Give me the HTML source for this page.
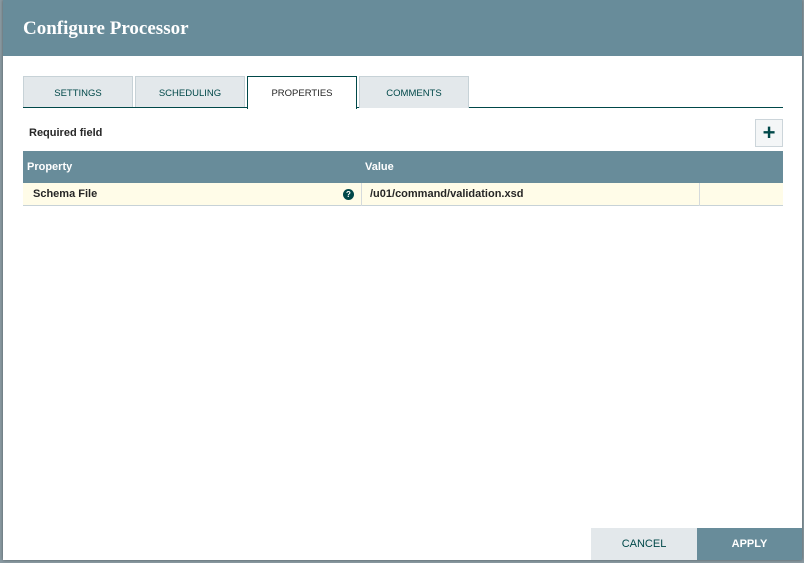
<!DOCTYPE html>
<html><head><style>
*{box-sizing:border-box;margin:0;padding:0}
body{width:804px;height:563px;background:#8a9aa2;font-family:"Liberation Sans",sans-serif;position:relative;overflow:hidden}
#dlg{position:absolute;left:3px;top:0;width:799px;height:560px;background:#fff;box-shadow:0 0 3px rgba(0,0,0,.4)}
#hdr{height:56px;background:#688c9a;color:#fff;font-family:"Liberation Serif",serif;font-weight:bold;font-size:19px;padding:18px 0 0 20px}
.tab{position:absolute;top:76px;height:32px;width:110px;background:#e3e8eb;border:1px solid #c7d2d7;border-bottom:none;font-size:9.5px;color:#004849;text-align:center;line-height:33px}
.tab.act{background:#fff;border:1px solid #004849;border-bottom:none;height:33px;color:#262626}
#line{position:absolute;left:20px;top:107px;width:760px;height:1px;background:#004849}
.abs{position:absolute}
</style></head><body>
<div id="dlg">
<div id="hdr">Configure Processor</div>
<div class="tab" style="left:20px">SETTINGS</div>
<div class="tab" style="left:132px">SCHEDULING</div>
<div id="line"></div>
<div class="tab act" style="left:244px">PROPERTIES</div>
<div class="tab" style="left:356px">COMMENTS</div>
<div class="abs" style="left:26px;top:127px;font-size:11px;color:#262626;font-weight:bold">Required field</div>
<div class="abs" style="left:752px;top:119px;width:28px;height:28px;border:1px solid #ccd5da;background:#f4f6f7;color:#004849;font-size:22px;font-weight:bold;text-align:center;line-height:26px">+</div>
<div class="abs" style="left:20px;top:151px;width:760px;height:32px;background:#688c9a;color:#fff;font-weight:bold;font-size:11px">
<span class="abs" style="left:4px;top:10px">Property</span><span class="abs" style="left:342px;top:10px">Value</span></div>
<div class="abs" style="left:20px;top:183px;width:760px;height:23px;background:#fffce8;border-bottom:1px solid #c7d2d7;font-size:11px;color:#262626;font-weight:bold">
<span class="abs" style="left:10px;top:5px">Schema File</span>
<span class="abs" style="left:320px;top:6px;width:11px;height:11px;border-radius:50%;background:#004849;color:#fff;font-size:8px;font-weight:bold;text-align:center;line-height:11px">?</span>
<span class="abs" style="left:338px;top:0;width:1px;height:23px;background:#d5dadc"></span>
<span class="abs" style="left:347px;top:5px">/u01/command/validation.xsd</span>
<span class="abs" style="left:676px;top:0;width:1px;height:23px;background:#d5dadc"></span>
</div>
<div class="abs" style="left:588px;top:528px;width:106px;height:32px;background:#e3e8eb;color:#004849;font-size:11px;text-align:center;line-height:33px">CANCEL</div>
<div class="abs" style="left:694px;top:528px;width:105px;height:32px;background:#688c9a;color:#fff;font-size:11px;font-weight:bold;text-align:center;line-height:33px">APPLY</div>
</div>
</body></html>
